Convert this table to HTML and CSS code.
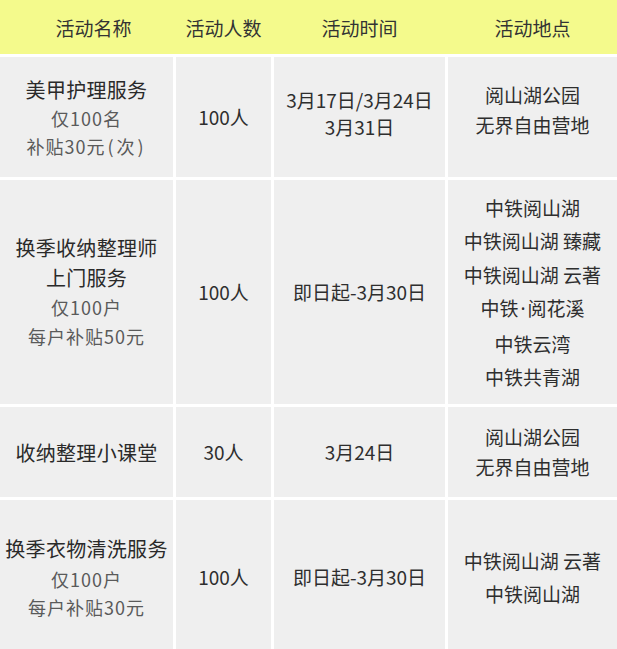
FILE: index.html
```html
<!DOCTYPE html>
<html lang="zh">
<head>
<meta charset="utf-8">
<link rel="stylesheet" href="styles.css">
</head>
<body>
<div class="table">
  <div class="head">
    <div class="th th-first">活动名称</div>
    <div class="th">活动人数</div>
    <div class="th">活动时间</div>
    <div class="th">活动地点</div>
  </div>
  <div class="body">
    <div class="td name r1"><div class="title">美甲护理服务</div><div class="sub">仅100名</div><div class="sub">补贴30元<span class="paren">(</span>次<span class="paren">)</span></div></div>
    <div class="td">100人</div>
    <div class="td lh27 up8"><div>3月17日/3月24日</div><div>3月31日</div></div>
    <div class="td lh30 up14"><div>阅山湖公园</div><div>无界自由营地</div></div>

    <div class="td name r2"><div class="title">换季收纳整理师</div><div class="title">上门服务</div><div class="sub">仅100户</div><div class="sub">每户补贴50元</div></div>
    <div class="td">100人</div>
    <div class="td">即日起-3月30日</div>
    <div class="td lh33"><div>中铁阅山湖</div><div>中铁阅山湖 臻藏</div><div>中铁阅山湖 云著</div><div>中铁<span class="dot">·</span>阅花溪</div><div>中铁云湾</div><div>中铁共青湖</div></div>

    <div class="td name r3"><div class="title">收纳整理小课堂</div></div>
    <div class="td">30人</div>
    <div class="td">3月24日</div>
    <div class="td lh30"><div>阅山湖公园</div><div>无界自由营地</div></div>

    <div class="td name r4"><div class="title t4">换季衣物清洗服务</div><div class="sub">仅100户</div><div class="sub">每户补贴30元</div></div>
    <div class="td">100人</div>
    <div class="td">即日起-3月30日</div>
    <div class="td lh33"><div>中铁阅山湖 云著</div><div>中铁阅山湖</div></div>
  </div>
</div>
</body>
</html>
```

FILE: styles.css
```css
html, body {
  margin: 0;
  padding: 0;
  background: #ffffff;
}
body {
  font-family: "Noto Sans CJK SC", "Noto Sans", sans-serif;
  color: #2e2e2e;
  width: 617px;
  height: 649px;
  overflow: hidden;
}
.table {
  display: flex;
  flex-direction: column;
  row-gap: 3px;
}
.head {
  display: grid;
  grid-template-columns: 173px 95px 171px 169px;
  column-gap: 3px;
  height: 54px;
  background: #f4fa8c;
}
.th {
  display: flex;
  align-items: center;
  justify-content: center;
  font-size: 19px;
  color: #333333;
}
.th-first {
  padding-left: 14px;
}
.body {
  display: grid;
  grid-template-columns: 173px 95px 171px 169px;
  grid-template-rows: 120px 224px 90px 154px;
  column-gap: 3px;
  row-gap: 3px;
}
.td {
  background: #efefef;
  display: flex;
  flex-direction: column;
  align-items: center;
  justify-content: center;
  text-align: center;
  font-size: 19px;
  line-height: 28px;
  color: #2e2e2e;
}
.name .title {
  font-size: 20px;
  line-height: 29px;
  color: #2a2a2a;
  letter-spacing: 0.3px;
}
.name .sub {
  font-size: 18px;
  line-height: 28px;
  color: #5a5a5a;
  letter-spacing: 1px;
}
.paren {
  display: inline-block;
  margin: 0 2px;
}
.dot {
  font-family: "Noto Sans", sans-serif;
  margin: 0 2px;
}
.name .t4 {
  line-height: 32px;
}
.r2 .title {
  line-height: 30px;
}
.r2 .sub {
  line-height: 29px;
}
.lh27 { line-height: 27px; }
.lh30 { line-height: 30px; }
.lh33 { line-height: 33.5px; }
.up8 { padding-bottom: 8px; }
.up14 { padding-bottom: 14px; }
```
